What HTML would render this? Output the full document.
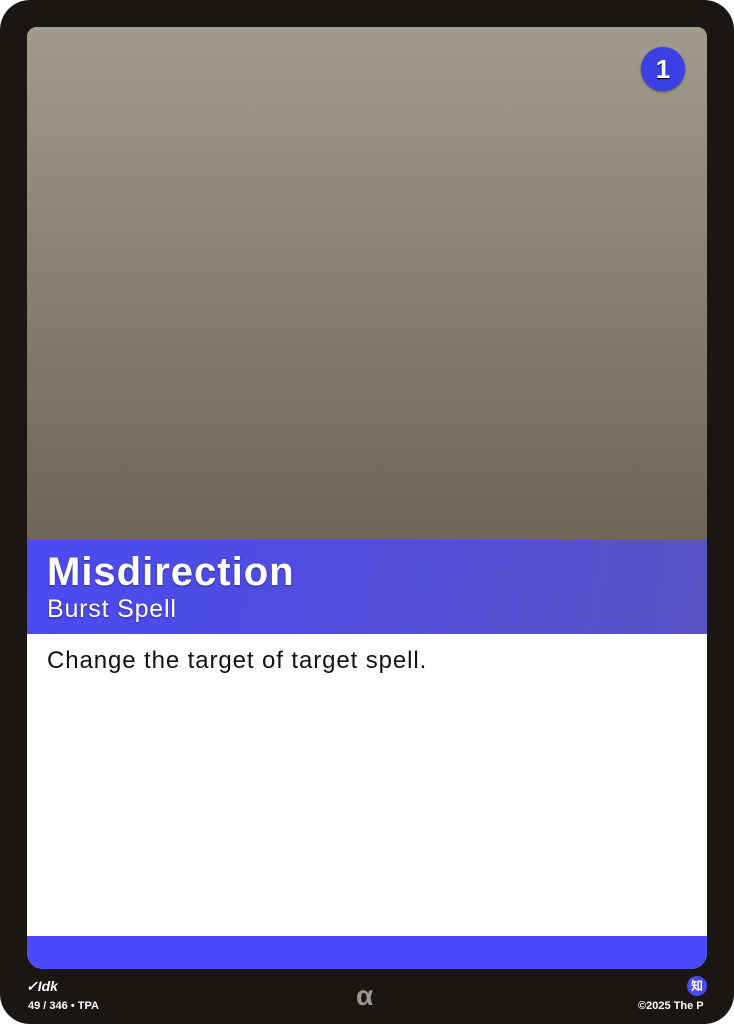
<!DOCTYPE html>
<html><head><style>
body{margin:0;background:#fff;width:734px;height:1024px;overflow:hidden;font-family:"Liberation Sans",sans-serif}
.card{position:absolute;left:0;top:0;width:734px;height:1024px;background:#1a1713;border-radius:30px;overflow:hidden}
.inner{position:absolute;left:27px;top:27px;width:680px;height:942px;border-radius:10px 10px 16px 16px;overflow:hidden;background:#fff}
.art{position:absolute;left:0;top:0;width:680px;height:513px;background:linear-gradient(#a29a8e,#6e6556)}
.cost{position:absolute;left:614px;top:20px;width:44px;height:44px;border-radius:50%;background:#3c3ee6;box-shadow:0 1px 2px rgba(0,0,0,.5);color:#fff;font-weight:bold;font-size:26px;text-align:center;line-height:44px;text-shadow:0 1px 1px #000}
.title{position:absolute;left:0;top:513px;width:680px;height:94px;background:linear-gradient(100deg,#4b4af2,#5852c4)}
.title h1{position:absolute;left:20px;top:10px;margin:0;color:#fff;font-size:40px;letter-spacing:1px;font-weight:bold;text-shadow:0 1px 2px rgba(0,0,0,.4)}
.title h2{position:absolute;left:20px;top:55px;margin:0;color:#fff;font-size:25px;letter-spacing:.8px;font-weight:normal;text-shadow:0 1px 2px rgba(0,0,0,.4)}
.text{position:absolute;left:20px;top:620px;font-size:24px;letter-spacing:.9px;color:#111}
.bar{position:absolute;left:0;top:909px;width:680px;height:33px;background:#4a4afa}
.f{position:absolute;color:#fff;font-size:12px;font-weight:bold}
</style></head><body>
<div class="card">
<div class="inner">
<div class="art"><div class="cost">1</div></div>
<div class="title"><h1>Misdirection</h1><h2>Burst Spell</h2></div>
<div class="text">Change the target of target spell.</div>
<div class="bar"></div>
</div>
<div class="f" style="left:26px;top:978px;font-size:14px;font-style:italic">✓Idk</div>
<div class="f" style="left:28px;top:1000px;font-size:11px">49 / 346 • TPA</div>
<div class="f" style="left:356px;top:980px;font-size:28px;color:#9a9896">α</div>
<div class="f" style="left:687px;top:976px;width:20px;height:20px;border-radius:50%;background:#4a4af0;font-size:12px;text-align:center;line-height:20px;font-family:'Noto Sans CJK JP',sans-serif">知</div>
<div class="f" style="left:638px;top:1000px;font-size:11px">©2025 The P</div>
</div>
</body></html>
